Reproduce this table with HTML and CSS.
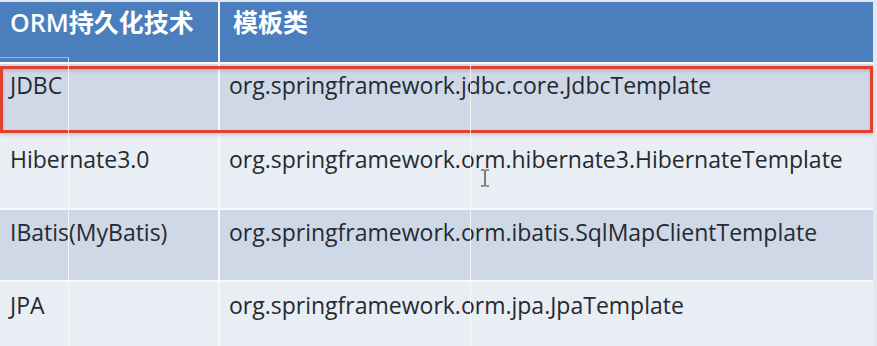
FILE: index.html
```html
<!DOCTYPE html>
<html lang="zh">
<head>
<meta charset="utf-8">
<title>ORM模板类</title>
<link rel="stylesheet" href="styles.css">
</head>
<body>
<div class="stage">
  <div class="table">
    <div class="cell head">ORM持久化技术</div>
    <div class="cell head">模板类</div>
    <div class="cell dark r1">JDBC</div>
    <div class="cell dark r1">org.springframework.jdbc.core.JdbcTemplate</div>
    <div class="cell light r2">Hibernate3.0</div>
    <div class="cell light r2">org.springframework.orm.hibernate3.HibernateTemplate</div>
    <div class="cell dark r3">IBatis(MyBatis)</div>
    <div class="cell dark r3">org.springframework.orm.ibatis.SqlMapClientTemplate</div>
    <div class="cell light r4">JPA</div>
    <div class="cell light r4">org.springframework.orm.jpa.JpaTemplate</div>
  </div>
  <div class="redbox"></div>
  <div class="ghost ghost-a"></div>
  <div class="ghost ghost-b"></div>
  <div class="ghost-h"></div>
  <svg class="cursor" width="10" height="18" viewBox="0 0 10 18"><path d="M1 1h3.5M5.5 1H9M5 1.5v15M1 17h3.5M5.5 17H9" stroke="#333" stroke-width="1.2" fill="none"/></svg>
</div>
</body>
</html>
```

FILE: styles.css
```css
html, body {
  margin: 0;
  padding: 0;
}
body {
  width: 877px;
  height: 346px;
  overflow: hidden;
  background: #eef1f6;
  font-family: "Open Sans", "Noto Sans CJK SC", sans-serif;
}
.stage {
  position: relative;
  width: 877px;
  height: 346px;
  padding-top: 2px;
  box-sizing: border-box;
  background: #e4e9f0;
}
.table {
  display: grid;
  grid-template-columns: 218px 653px;
  grid-template-rows: 60px 67px 75px 70px 64px;
  gap: 2px;
  width: 873px;
  background: #f7f9fc;
}
.cell {
  box-sizing: border-box;
  font-size: 23px;
  line-height: 30px;
  color: #262a30;
  padding-left: 10px;
  white-space: nowrap;
}
.cell:nth-child(even) {
  padding-left: 9px;
}
.head {
  background: #4a7ebd;
  color: #ffffff;
  font-family: "Open Sans", "Noto Sans CJK SC", sans-serif;
  font-weight: 600;
  font-size: 25px;
  line-height: 34px;
  padding-top: 3px;
}
.head:nth-child(even) {
  padding-left: 13px;
}
.dark {
  background: #cfd8e7;
}
.light {
  background: #e9edf4;
}
.r1 { padding-top: 6px; }
.r2 { padding-top: 11px; }
.r3 { padding-top: 7px; }
.r4 { padding-top: 8px; }
.redbox {
  position: absolute;
  left: 0;
  top: 66px;
  width: 873px;
  height: 67px;
  box-sizing: border-box;
  border: 3px solid #e4402e;
  box-shadow: inset 0 2px 3px rgba(120, 120, 140, 0.35), 0 2px 3px rgba(120, 120, 140, 0.3);
}
.ghost {
  position: absolute;
  width: 1px;
  background: rgba(255, 255, 255, 0.7);
}
.ghost-a {
  left: 68px;
  top: 57px;
  bottom: 0;
}
.ghost-b {
  left: 470px;
  top: 64px;
  bottom: 0;
}
.ghost-h {
  position: absolute;
  left: 0;
  top: 57px;
  width: 69px;
  height: 1px;
  background: rgba(170, 200, 240, 0.8);
}
.cursor {
  position: absolute;
  left: 480px;
  top: 169px;
}
```
